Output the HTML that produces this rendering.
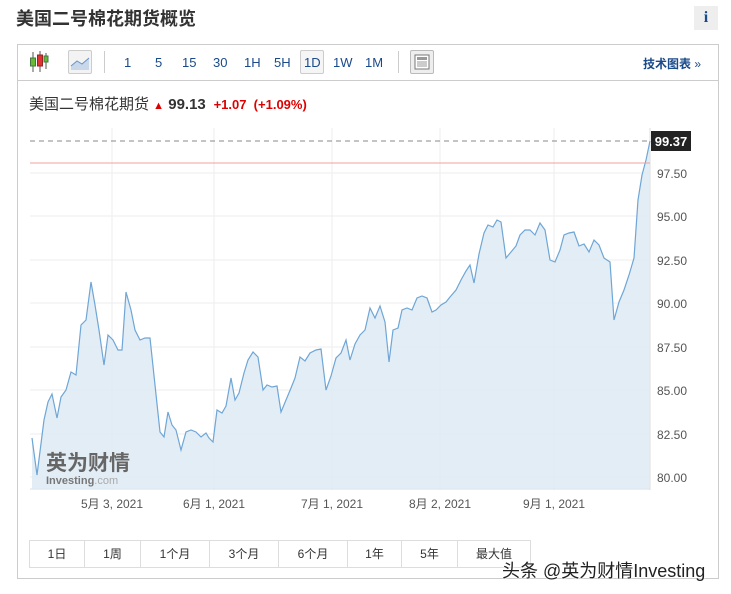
<!DOCTYPE html>
<html><head><meta charset="utf-8"><style>
*{margin:0;padding:0;box-sizing:border-box}
body{width:731px;height:594px;background:#fff;font-family:"Liberation Sans","Noto Sans CJK SC",sans-serif;position:relative;overflow:hidden;color:#333}
.abs{position:absolute}
.tb{font-size:13px;color:#1a4a8a;top:55px}
</style></head><body>
<div class="abs" style="left:16px;top:5px;font-size:18px;font-weight:bold;color:#333">美国二号棉花期货概览</div>
<div class="abs" style="left:694px;top:6px;width:24px;height:24px;background:#eee;color:#1a4a8a;font-weight:bold;font-size:16px;text-align:center;line-height:24px;font-family:'Liberation Serif',serif">i</div>
<div class="abs" style="left:17px;top:44px;width:702px;height:535px;border:1px solid #ccc"></div>
<div class="abs" style="left:18px;top:80px;width:700px;height:1px;background:#ccc"></div>
<svg class="abs" style="left:28px;top:50px" width="24" height="24"><g stroke="#555"><line x1="5" y1="2" x2="5" y2="22"/><line x1="12" y1="1" x2="12" y2="22"/><line x1="18" y1="3" x2="18" y2="19"/></g><rect x="2.5" y="8" width="5" height="8" fill="#6b3" stroke="#474"/><rect x="9.5" y="5" width="5" height="11" fill="#d33" stroke="#922"/><rect x="16" y="6" width="4" height="6" fill="#6b3" stroke="#474"/></svg>
<div class="abs" style="left:68px;top:50px;width:24px;height:24px;border:1px solid #ccc;border-radius:2px;background:#f3f3f3"><svg width="22" height="22"><path d="M2 15 L8 10 L13 13 L20 7 L20 19 L2 19Z" fill="#c8d8ea"/><path d="M2 15 L8 10 L13 13 L20 7" stroke="#6a93c4" fill="none"/></svg></div>
<div class="abs" style="left:104px;top:51px;width:1px;height:22px;background:#ccc"></div>
<div class="abs tb" style="left:124px">1</div>
<div class="abs tb" style="left:155px">5</div>
<div class="abs tb" style="left:182px">15</div>
<div class="abs tb" style="left:213px">30</div>
<div class="abs tb" style="left:244px">1H</div>
<div class="abs tb" style="left:274px">5H</div>
<div class="abs" style="left:300px;top:50px;width:24px;height:24px;border:1px solid #ccc;border-radius:2px;background:#f5f5f5"></div>
<div class="abs tb" style="left:304px">1D</div>
<div class="abs tb" style="left:333px">1W</div>
<div class="abs tb" style="left:365px">1M</div>
<div class="abs" style="left:398px;top:51px;width:1px;height:22px;background:#ccc"></div>
<div class="abs" style="left:410px;top:50px;width:24px;height:24px;border:1px solid #bbb;border-radius:2px;background:#eee"><svg width="22" height="22"><rect x="4" y="4" width="14" height="14" fill="#fff" stroke="#777"/><rect x="6" y="6" width="10" height="3" fill="#999"/><line x1="6" y1="11" x2="16" y2="11" stroke="#999"/><line x1="6" y1="13" x2="16" y2="13" stroke="#999"/><line x1="6" y1="15" x2="16" y2="15" stroke="#999"/></svg></div>
<div class="abs tb" style="left:643px;font-weight:bold;font-size:12px;top:55px">技术图表 <span style="font-weight:normal">»</span></div>
<div class="abs" style="left:29px;top:93px;font-size:15px;color:#333;white-space:nowrap">美国二号棉花期货 <span style="color:#d00;font-size:11px">▲</span><b style="font-size:15px"> 99.13</b> <span style="color:#d00;font-size:13px;font-weight:bold">&nbsp;+1.07 &nbsp;(+1.09%)</span></div>
<svg class="abs" style="left:0;top:0" width="731" height="594">
<g stroke="#eee"><line x1="112" y1="128" x2="112" y2="490"/><line x1="214" y1="128" x2="214" y2="490"/><line x1="332" y1="128" x2="332" y2="490"/><line x1="440" y1="128" x2="440" y2="490"/><line x1="554" y1="128" x2="554" y2="490"/>
<line x1="30" y1="173" x2="650" y2="173"/><line x1="30" y1="216" x2="650" y2="216"/><line x1="30" y1="260" x2="650" y2="260"/><line x1="30" y1="303" x2="650" y2="303"/><line x1="30" y1="347" x2="650" y2="347"/><line x1="30" y1="390" x2="650" y2="390"/><line x1="30" y1="434" x2="650" y2="434"/><line x1="30" y1="477" x2="650" y2="477"/></g>
<line x1="650" y1="128" x2="650" y2="490" stroke="#ddd"/>
<line x1="30" y1="489" x2="650" y2="489" stroke="#ddd"/>
<polygon fill="#dce8f2" fill-opacity="0.8" points="32,489 32,438 37,475 44,420 48,402 52,394 57,418 61,397 66,390 71,372 76,375 81,325 86,320 91,282 95,305 99,330 104,365 108,335 113,340 118,350 122,350 126,292 131,310 135,330 140,340 145,338 150,338 155,385 160,432 164,437 168,412 172,425 176,430 181,450 186,432 191,430 196,432 201,437 206,433 209,438 213,442 217,410 222,413 226,406 231,378 235,400 239,393 244,373 248,360 253,352 258,357 263,390 267,385 272,387 277,386 281,412 286,400 291,388 295,378 300,357 305,361 310,353 316,350 321,349 326,390 331,376 336,358 341,353 346,340 350,360 355,344 360,335 365,330 370,308 375,318 380,306 385,322 389,362 393,330 398,328 402,310 407,308 412,310 417,298 422,296 427,298 432,312 436,310 441,305 446,302 450,297 456,290 461,280 466,271 470,265 474,283 479,254 484,233 488,225 493,227 497,220 501,222 506,258 511,252 516,246 520,235 525,230 530,230 535,235 540,223 545,230 550,260 555,262 560,250 564,235 569,233 574,232 579,246 584,244 589,252 594,240 599,245 604,258 610,262 614,320 619,302 624,290 629,275 634,258 638,200 642,175 646,160 650,141 650,489"/>
<polyline fill="none" stroke="#6fa6d6" stroke-width="1.2" points="32,438 37,475 44,420 48,402 52,394 57,418 61,397 66,390 71,372 76,375 81,325 86,320 91,282 95,305 99,330 104,365 108,335 113,340 118,350 122,350 126,292 131,310 135,330 140,340 145,338 150,338 155,385 160,432 164,437 168,412 172,425 176,430 181,450 186,432 191,430 196,432 201,437 206,433 209,438 213,442 217,410 222,413 226,406 231,378 235,400 239,393 244,373 248,360 253,352 258,357 263,390 267,385 272,387 277,386 281,412 286,400 291,388 295,378 300,357 305,361 310,353 316,350 321,349 326,390 331,376 336,358 341,353 346,340 350,360 355,344 360,335 365,330 370,308 375,318 380,306 385,322 389,362 393,330 398,328 402,310 407,308 412,310 417,298 422,296 427,298 432,312 436,310 441,305 446,302 450,297 456,290 461,280 466,271 470,265 474,283 479,254 484,233 488,225 493,227 497,220 501,222 506,258 511,252 516,246 520,235 525,230 530,230 535,235 540,223 545,230 550,260 555,262 560,250 564,235 569,233 574,232 579,246 584,244 589,252 594,240 599,245 604,258 610,262 614,320 619,302 624,290 629,275 634,258 638,200 642,175 646,160 650,141"/>
<line x1="30" y1="141" x2="650" y2="141" stroke="#888" stroke-dasharray="5,4"/>
<line x1="30" y1="163" x2="650" y2="163" stroke="#f2a0a0"/>
<rect x="651" y="131" width="40" height="20" fill="#222"/>
<text x="671" y="146" fill="#fff" font-size="13" font-weight="bold" text-anchor="middle" font-family="Liberation Sans">99.37</text>
<g font-size="12" fill="#555" font-family="Liberation Sans"><text x="657" y="178">97.50</text><text x="657" y="221">95.00</text><text x="657" y="265">92.50</text><text x="657" y="308">90.00</text><text x="657" y="352">87.50</text><text x="657" y="395">85.00</text><text x="657" y="439">82.50</text><text x="657" y="482">80.00</text></g>
<g font-size="12" fill="#555" text-anchor="middle" font-family="Liberation Sans,Noto Sans CJK SC"><text x="112" y="508">5月 3, 2021</text><text x="214" y="508">6月 1, 2021</text><text x="332" y="508">7月 1, 2021</text><text x="440" y="508">8月 2, 2021</text><text x="554" y="508">9月 1, 2021</text></g>
<text x="46" y="470" font-size="21" font-weight="bold" fill="#666" font-family="Noto Sans CJK SC">英为财情</text>
<text x="46" y="484" font-size="11" font-weight="bold" fill="#777" font-family="Liberation Sans">Investing<tspan font-weight="normal" fill="#aaa">.com</tspan></text>
</svg>
<div class="abs" style="left:29px;top:540px;height:28px;display:flex;border:1px solid #ddd;font-size:12px;color:#333">
<div style="width:55px;text-align:center;line-height:26px;border-right:1px solid #ddd">1日</div>
<div style="width:56px;text-align:center;line-height:26px;border-right:1px solid #ddd">1周</div>
<div style="width:69px;text-align:center;line-height:26px;border-right:1px solid #ddd">1个月</div>
<div style="width:69px;text-align:center;line-height:26px;border-right:1px solid #ddd">3个月</div>
<div style="width:69px;text-align:center;line-height:26px;border-right:1px solid #ddd">6个月</div>
<div style="width:54px;text-align:center;line-height:26px;border-right:1px solid #ddd">1年</div>
<div style="width:56px;text-align:center;line-height:26px;border-right:1px solid #ddd">5年</div>
<div style="width:72px;text-align:center;line-height:26px">最大值</div>
</div>
<div class="abs" style="left:502px;top:557px;font-size:18px;color:#222;white-space:nowrap;text-shadow:0 0 2px #fff,0 0 2px #fff">头条 @英为财情Investing</div>
</body></html>
